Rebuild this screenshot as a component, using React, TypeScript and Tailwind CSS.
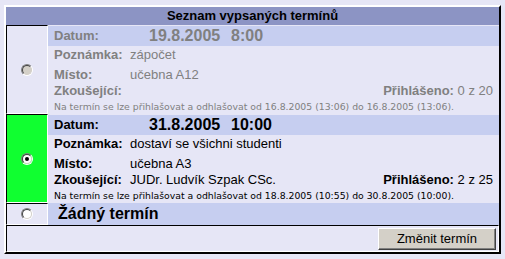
import React from 'react';

interface Term {
  id: string;
  date: string;
  time: string;
  note: string;
  place: string;
  examiner: string;
  signed: string;
  window: string;
  disabled?: boolean;
  checked?: boolean;
}

const terms: Term[] = [
  { id: 't1', date: '19.8.2005', time: '8:00', note: 'zápočet', place: 'učebna A12', examiner: '', signed: '0 z 20', window: 'Na termín se lze přihlašovat a odhlašovat od 16.8.2005 (13:06) do 16.8.2005 (13:06).', disabled: true },
  { id: 't2', date: '31.8.2005', time: '10:00', note: 'dostaví se všichni studenti', place: 'učebna A3', examiner: 'JUDr. Ludvík Szpak CSc.', signed: '2 z 25', window: 'Na termín se lze přihlašovat a odhlašovat od 18.8.2005 (10:55) do 30.8.2005 (10:00).', checked: true },
];

function Radio({ checked, disabled }: { checked?: boolean; disabled?: boolean }) {
  return (
    <span className="block w-3 h-3 rounded-full border border-t-[#808080] border-l-[#808080] border-b-white border-r-white">
      <span className={`flex items-center justify-center w-full h-full rounded-full border border-t-[#404040] border-l-[#404040] border-b-[#d4d0c8] border-r-[#d4d0c8] ${disabled ? 'bg-[#d4d0c8]' : 'bg-white'}`}>
        {checked && <span className="block w-1 h-1 rounded-full bg-black" />}
      </span>
    </span>
  );
}

function RadioCell({ checked, disabled }: { checked?: boolean; disabled?: boolean }) {
  return (
    <div className={`w-[42px] shrink-0 flex items-center justify-center border border-t-black border-l-black border-r-white border-b-white ${checked ? 'bg-[#10ff30]' : 'bg-[#e6e6f6]'}`}>
      <Radio checked={checked} disabled={disabled} />
    </div>
  );
}

function TermRow({ t }: { t: Term }) {
  const tone = t.disabled ? 'text-[#808080]' : 'text-black';
  return (
    <div className="flex">
      <RadioCell checked={t.checked} disabled={t.disabled} />
      <div className={`flex-1 flex flex-col text-[13px] ${tone}`}>
        <div className="mt-px h-[20px] bg-[#c6cef0] flex items-center pl-[6px]">
          <span className="w-[95px] font-bold">Datum:</span>
          <span className="w-[82px] text-[16px] font-bold">{t.date}</span>
          <span className="text-[16px] font-bold">{t.time}</span>
        </div>
        <div className="pt-px pb-[3px] leading-[16px] flex pl-[6px]">
          <span className="w-[76px] font-bold">Poznámka:</span>
          <span>{t.note}</span>
        </div>
        <div className="pt-px leading-[16px] flex pl-[6px]">
          <span className="w-[76px] font-bold">Místo:</span>
          <span>{t.place}</span>
        </div>
        <div className="leading-[16px] flex pl-[6px] pr-[6px]">
          <span className="w-[76px] font-bold">Zkoušející:</span>
          <span className="flex-1">{t.examiner}</span>
          <span><b>Přihlášeno:</b> {t.signed}</span>
        </div>
        <div className="pt-px leading-[14px] pl-[6px] text-[9.3px] font-['DejaVu_Sans',sans-serif]">{t.window}</div>
      </div>
    </div>
  );
}

export default function App() {
  return (
    <div className="min-h-screen bg-[#e6e6f6] pt-[5px] pl-[4px] font-['Liberation_Sans',Arial,sans-serif]">
      <div className="w-[497px] border-2 border-t-white border-l-white border-r-black border-b-black bg-[#e6e6f6]">
        <div className="h-[18px] bg-[#8c94c4] flex items-center justify-center text-[13px] font-bold text-black">Seznam vypsaných termínů</div>
        {terms.map(t => <TermRow key={t.id} t={t} />)}
        <div className="flex h-[22px]">
          <RadioCell />
          <div className="flex-1 bg-[#c6cef0] flex items-center pl-[10px] text-[16px] font-bold text-black">Žádný termín</div>
        </div>
        <div className="h-[27px] border border-t-black border-l-black border-r-white border-b-white flex items-center justify-end pr-[2px]">
          <button className="h-[22px] w-[118px] bg-[#d4d0c8] text-[13px] text-black border border-t-white border-l-white border-r-[#404040] border-b-[#404040] shadow-[inset_-1px_-1px_0_#808080]">Změnit termín</button>
        </div>
      </div>
    </div>
  );
}
